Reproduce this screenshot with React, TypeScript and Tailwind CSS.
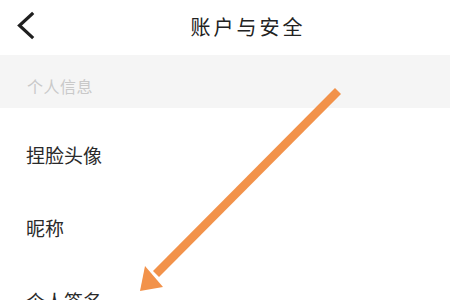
import React from 'react';

const font = { fontFamily: '"Noto Sans CJK SC", "Noto Sans", sans-serif' };

const rows = ['捏脸头像', '昵称', '个人签名'];

export default function App() {
  return (
    <div className="relative h-[300px] w-[450px] overflow-hidden bg-white" style={font}>
      {/* Top bar */}
      <div className="flex h-[55px] items-center bg-white">
        <div className="flex w-[46px] items-center justify-center">
          <svg width="46" height="55" viewBox="0 0 46 55">
            <polyline
              points="32,13 19.5,24.5 32,36"
              fill="none"
              stroke="#1f1f1f"
              strokeWidth="3.2"
              strokeLinecap="square"
              transform="translate(0,1)"
            />
          </svg>
        </div>
        <div className="flex-1 text-center text-[20px] tracking-[3px] text-[#222] -mt-[2px]">
          账户与安全
        </div>
      </div>

      {/* Section header */}
      <div className="flex h-[53px] items-center bg-[#f5f5f5] pl-[27px] pt-[9px] text-[16px] tracking-[0.5px] text-[#c9c9c9]">
        个人信息
      </div>

      {/* Rows */}
      <div className="pt-[11px]">
        {rows.map((r) => (
          <div key={r} className="flex h-[73px] items-center pl-[26px] text-[19px] text-[#2a2a2a]">
            {r}
          </div>
        ))}
      </div>

      {/* Annotation arrow */}
      <svg className="pointer-events-none absolute left-0 top-0" width="450" height="300" viewBox="0 0 450 300">
        <line x1="338" y1="91" x2="156" y2="274" stroke="#f2924a" strokeWidth="8.5" />
        <polygon points="140,291 145,266 163,287" fill="#f2924a" />
      </svg>
    </div>
  );
}
